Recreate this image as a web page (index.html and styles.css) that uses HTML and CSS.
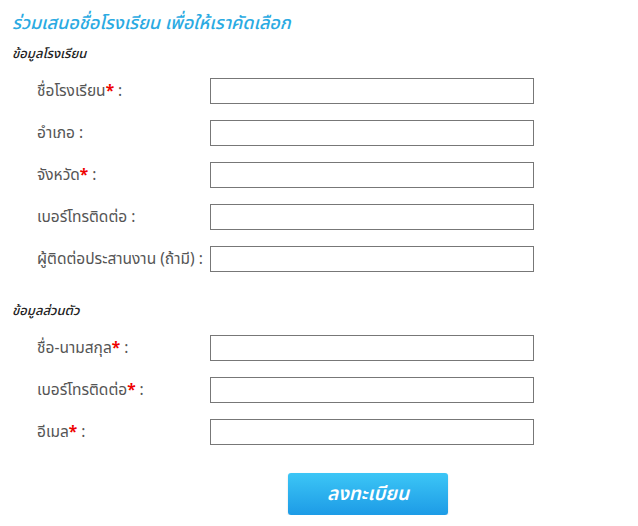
FILE: index.html
```html
<!DOCTYPE html>
<html lang="th">
<head>
<meta charset="utf-8">
<link rel="stylesheet" href="styles.css">
</head>
<body>
<div class="page">
  <h1 class="title">ร่วมเสนอชื่อโรงเรียน เพื่อให้เราคัดเลือก</h1>
  <h2 class="section">ข้อมูลโรงเรียน</h2>
  <div class="rows">
    <div class="row"><label class="label">ชื่อโรงเรียน<span class="req">*</span> :</label><input class="field" type="text"></div>
    <div class="row"><label class="label">อำเภอ :</label><input class="field" type="text"></div>
    <div class="row"><label class="label">จังหวัด<span class="req">*</span> :</label><input class="field" type="text"></div>
    <div class="row"><label class="label">เบอร์โทรติดต่อ :</label><input class="field" type="text"></div>
    <div class="row"><label class="label">ผู้ติดต่อประสานงาน (ถ้ามี) :</label><input class="field" type="text"></div>
  </div>
  <h2 class="section section2">ข้อมูลส่วนตัว</h2>
  <div class="rows">
    <div class="row"><label class="label">ชื่อ-นามสกุล<span class="req">*</span> :</label><input class="field" type="text"></div>
    <div class="row"><label class="label">เบอร์โทรติดต่อ<span class="req">*</span> :</label><input class="field" type="text"></div>
    <div class="row"><label class="label">อีเมล<span class="req">*</span> :</label><input class="field" type="text"></div>
  </div>
  <div class="actions"><button class="submit" type="button">ลงทะเบียน</button></div>
</div>
</body>
</html>
```
FILE: styles.css
```css
html, body { margin: 0; padding: 0; background: #fff; }
body { font-family: "Noto Sans", "Noto Sans Thai", "Liberation Sans", sans-serif; }
.page { padding: 10px 0 0 12px; }
.title {
  margin: 0;
  font-size: 18px;
  font-weight: 500;
  font-style: italic;
  color: #2aaae2;
  line-height: 24px;
  height: 24px;
}
.section {
  margin: 10px 0 0 0;
  font-size: 13px;
  font-weight: 500;
  font-style: italic;
  color: #222;
  line-height: 18px;
}
.section2 { margin-top: 29px; }
.rows { display: flex; flex-direction: column; gap: 16px; margin-top: 16px; }
.row { display: flex; align-items: center; height: 26px; }
.label {
  width: 173px;
  padding-left: 25px;
  font-size: 15.5px;
  color: #555;
  white-space: nowrap;
}
.req { color: #e00; font-weight: bold; }
.field {
  box-sizing: border-box;
  width: 324px;
  height: 26px;
  border: 1px solid #777;
  margin: 0;
  padding: 0 4px;
  background: #fff;
}
.actions { display: flex; padding-left: 276px; margin-top: 28px; }
.submit {
  width: 160px;
  height: 42px;
  border: 0;
  border-radius: 3px;
  background: linear-gradient(#3cc6f6, #1d9be6);
  color: #fff;
  font-family: inherit;
  font-size: 19px;
  font-weight: 600;
  font-style: italic;
  box-shadow: 0 1px 2px rgba(0,0,0,0.15);
}
```
